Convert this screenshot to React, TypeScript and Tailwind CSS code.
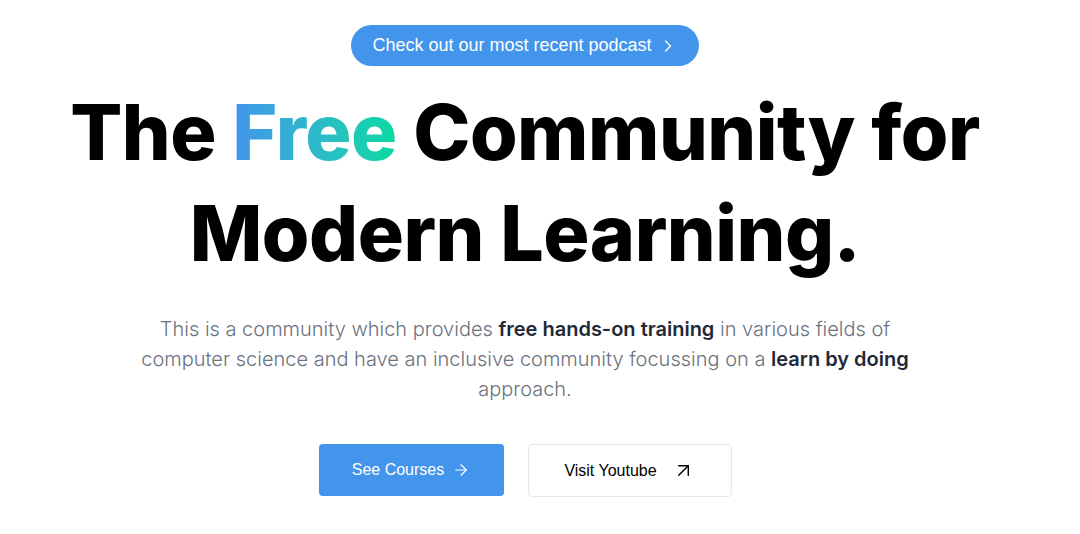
import { ChevronRight, ArrowRight, ArrowUpRight } from "lucide-react";

export default function App() {
  return (
    <div className="w-full h-[534px] bg-white overflow-hidden">
      <div className="w-[1050px] flex flex-col items-center pt-[25px]">
        {/* podcast pill */}
        <a
          href="#"
          className="flex items-center gap-[6px] h-[41px] px-[21px] rounded-full bg-[#4394eb] text-white text-[18px]"
          style={{ fontFamily: '"Liberation Sans", Arial, sans-serif' }}
        >
          Check out our most recent podcast
          <ChevronRight size={20} strokeWidth={1.5} />
        </a>

        {/* heading */}
        <h1
          className="mt-[16px] text-center text-black font-extrabold text-[77px] leading-[101px] tracking-[-0.5px]"
          style={{ fontFamily: 'Inter, "Noto Sans", sans-serif' }}
        >
          The{" "}
          <span className="bg-gradient-to-r from-[#4394eb] to-[#07d9a0] bg-clip-text text-transparent">
            Free
          </span>{" "}
          Community for
          <br />
          Modern Learning.
        </h1>

        {/* description */}
        <p
          className="mt-[30px] w-[800px] text-center text-[20px] leading-[30px] font-light text-[#6b7280]"
          style={{ fontFamily: 'Inter, "Noto Sans", sans-serif' }}
        >
          This is a community which provides{" "}
          <b className="font-semibold text-[#1f2937]">free hands-on training</b>{" "}
          in various fields of
          <br />
          computer science and have an inclusive community focussing on a{" "}
          <b className="font-semibold text-[#1f2937]">learn by doing</b>{" "}
          approach.
        </p>

        {/* buttons */}
        <div
          className="mt-[40px] flex gap-[24px]"
          style={{ fontFamily: '"Liberation Sans", Arial, sans-serif' }}
        >
          <a
            href="#"
            className="flex items-center justify-center gap-[8px] w-[185px] h-[52px] rounded-[4px] bg-[#4394eb] text-white text-[16px]"
          >
            See Courses
            <ArrowRight size={18} strokeWidth={1.5} />
          </a>
          <a
            href="#"
            className="flex items-center justify-center gap-[15px] w-[204px] h-[53px] rounded-[4px] border border-[#e5e7eb] text-black text-[16px]"
          >
            Visit Youtube
            <ArrowUpRight size={23} strokeWidth={1.5} />
          </a>
        </div>
      </div>
    </div>
  );
}
